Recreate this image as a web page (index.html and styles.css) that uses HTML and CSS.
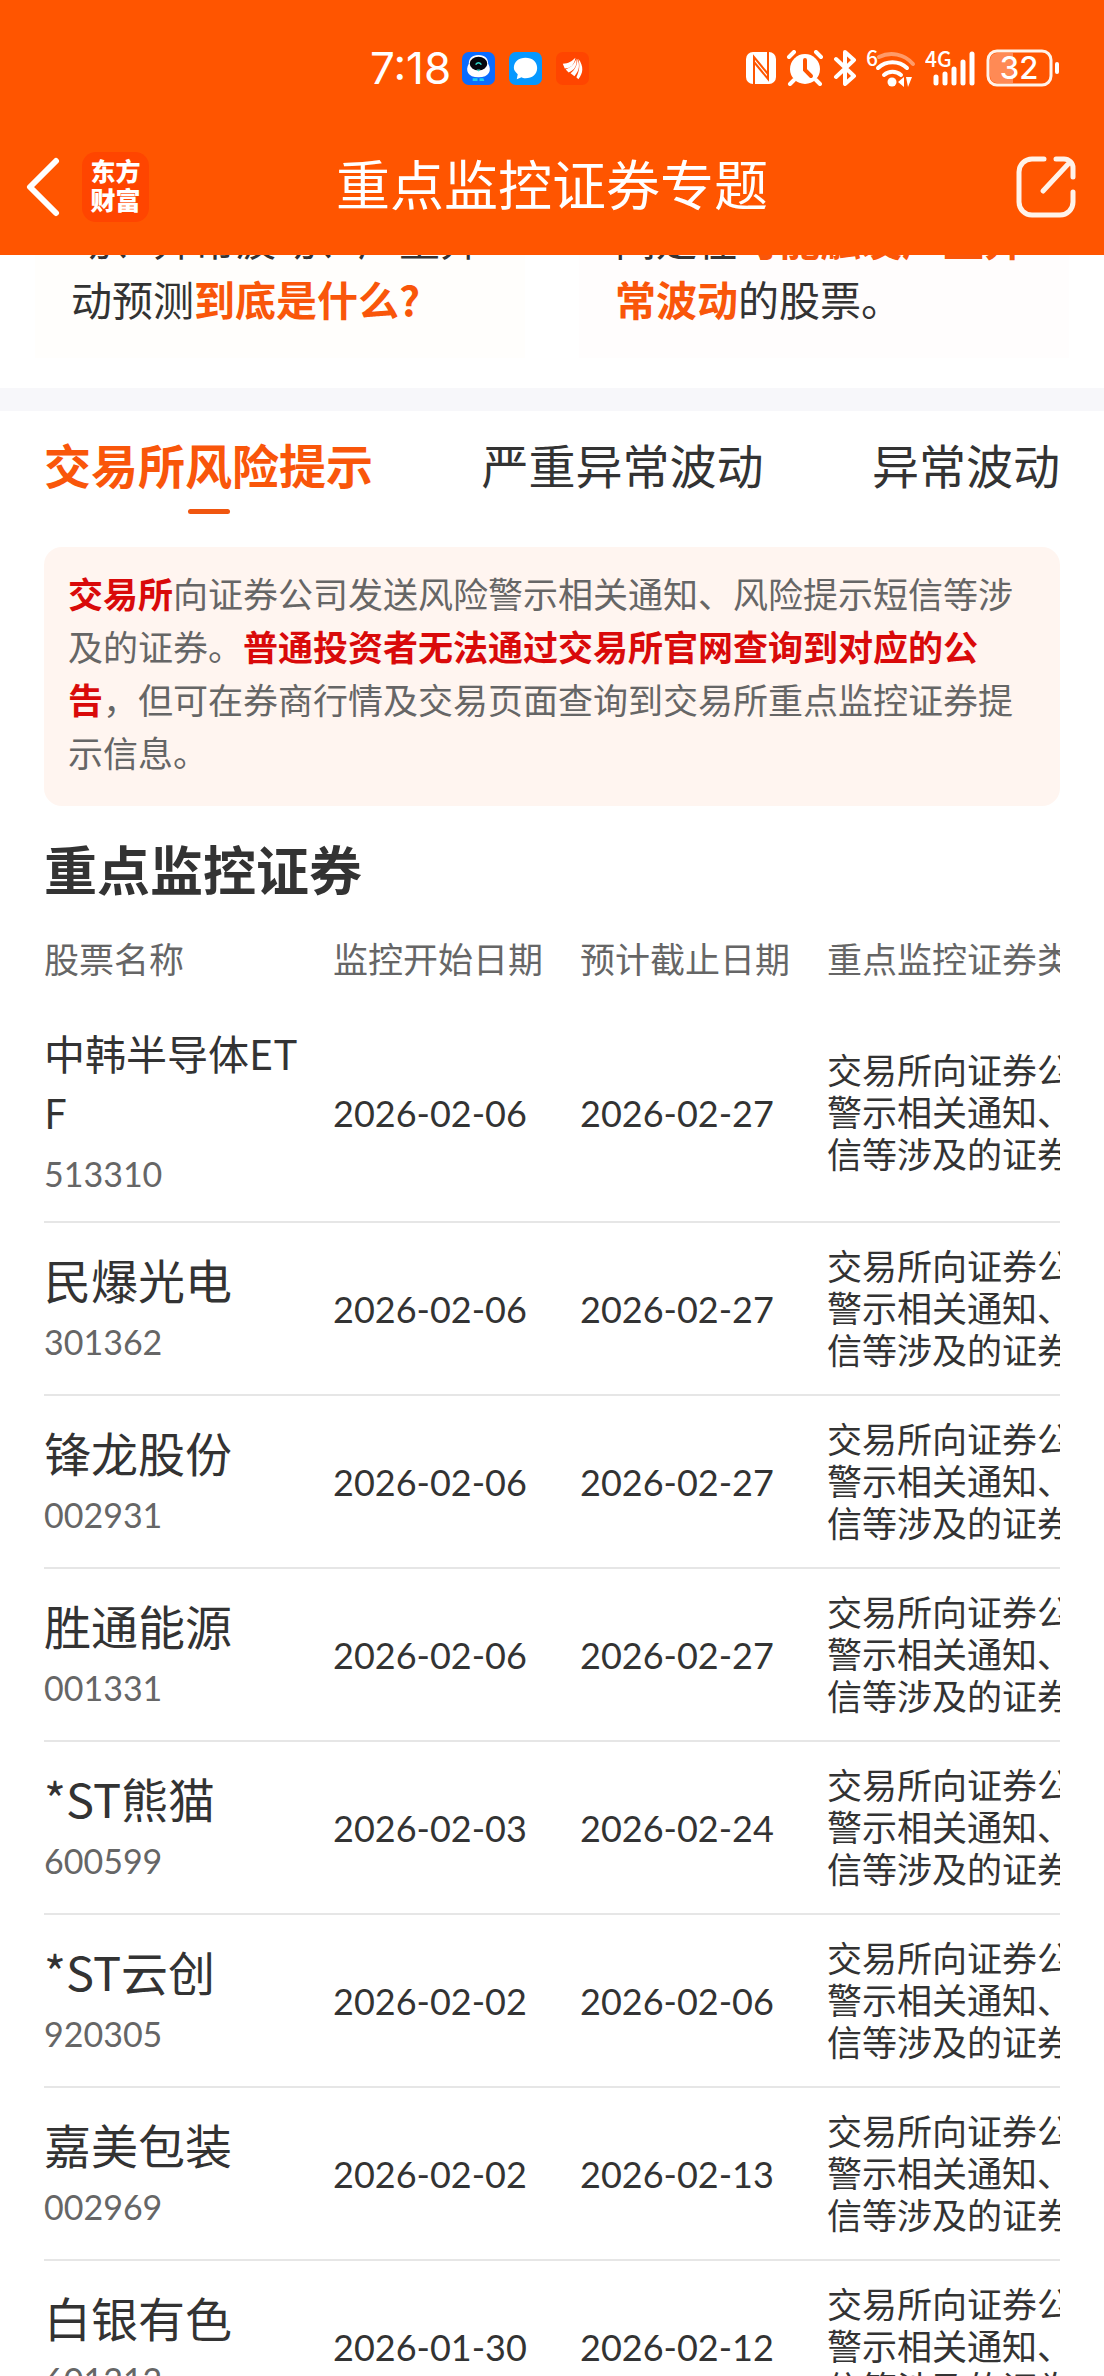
FILE: index.html
```html
<!doctype html>
<html lang="zh-CN">
  <head>
    <meta charset="UTF-8" />
    <meta name="viewport" content="width=device-width, initial-scale=1.0" />
    <title>重点监控证券专题</title>
    <link rel="stylesheet" href="styles.css">
  </head>
  <body>
    <header class="top">
      <div class="status-bar">
        <div class="status-left">
          <span class="time">7:18</span>
          <svg class="app-icon" viewBox="0 0 34 34">
            <rect width="34" height="34" rx="7" fill="#0a6cff" />
            <path d="M11 27h5v3h-5zM18 27h4l1 3h-5z" fill="#1fd0ee" />
            <path d="M17 3c7 0 10 4 10 9 4 7 1 14-10 14S3 19 7 12c0-5 3-9 10-9z" fill="#fff" />
            <ellipse cx="17" cy="12" rx="9" ry="7" fill="#05070d" />
            <path d="M14 13q3-4 6 0" fill="none" stroke="#2fd6c8" stroke-width="1.5" />
            <path d="M15 18h4l-2 2z" fill="#2fd6c8" />
          </svg>
          <svg class="app-icon" viewBox="0 0 34 34">
            <rect width="34" height="34" rx="7" fill="#0698ff" />
            <path d="M17 6c7 0 12 4 12 10.5S24 27 17 27c-2 0-3 0-4-1l-5 2 1-5c-2-2-4-4-4-6.500C5 10 10 6 17 6z" fill="#fff" />
          </svg>
          <svg class="app-icon" viewBox="0 0 34 34">
            <rect width="34" height="34" rx="7" fill="#ff4500" />
            <path d="M7 12c6 0 9-2 13-6-1 7-5 11-11 11zM10 18c6-2 9-6 11-11 1 7-2 12-8 14zM15 22c5-4 7-9 7-15 3 7 2 12-3 18zM21 26c3-6 4-12 2-19 6 8 5 15 0 21z" fill="#fff" />
          </svg>
        </div>
        <div class="status-right">
          <svg width="32" height="34" viewBox="0 0 32 34">
            <rect x="1" y="1" width="30" height="32" rx="7" fill="#fff" />
            <path d="M9 33V6l14 17M23 1v27L9 11" fill="none" stroke="#ff5500" stroke-width="2" />
          </svg>
          <svg width="38" height="36" viewBox="0 0 38 36">
            <circle cx="19" cy="19" r="15" fill="#fff" />
            <path d="M3 7l5-5M35 7l-5-5M8 30l-4 4M30 30l4 4" stroke="#fff" stroke-width="4" stroke-linecap="round" />
            <path d="M19 10v10l6 6" fill="none" stroke="#ff5500" stroke-width="4" stroke-linecap="round" />
          </svg>
          <svg width="24" height="36" viewBox="0 0 24 36">
            <path d="M3 9l18 17-9 8V2l9 8L3 27" fill="none" stroke="#fff" stroke-width="4" stroke-linecap="round" stroke-linejoin="round" />
          </svg>
          <svg width="50" height="38" viewBox="0 0 50 38">
            <text class="tiny" x="0" y="17">6</text>
            <path d="M13 8a28 28 0 0 1 34 7" fill="none" stroke="#ff9b69" stroke-width="4" stroke-linecap="round" />
            <path d="M12 19a21 21 0 0 1 29 0M18 26a13 13 0 0 1 17 0" fill="none" stroke="#fff" stroke-width="4" stroke-linecap="round" />
            <circle cx="26" cy="33" r="4.5" fill="#fff" />
            <path d="M38 28v10l-6-5zM40 28h6l-4 10z" fill="#fff" />
          </svg>
          <svg width="52" height="38" viewBox="0 0 52 38">
            <text class="tiny" x="0" y="18">4G</text>
            <path d="M11 28v6M20 25v9M29 20v14M38 13v21M47 5v29" stroke="#fff" stroke-width="5" stroke-linecap="round" />
          </svg>
          <svg width="74" height="38" viewBox="0 0 74 38">
            <rect x="2" y="2" width="63" height="34" rx="9" fill="none" stroke="#fff3ea" stroke-width="3" />
            <path d="M27 4H11a7 7 0 0 0-7 7v16a7 7 0 0 0 7 7h16z" fill="#ff8a55" />
            <rect x="69" y="13" width="4" height="12" rx="2" fill="#fff" />
            <text class="charge" x="33" y="30" text-anchor="middle">32</text>
          </svg>
        </div>
      </div>
      <nav class="nav-bar">
        <button class="icon-btn" type="button" aria-label="返回">
          <svg width="36" height="60" viewBox="0 0 36 60">
            <path d="M30 4L4 30l26 26" fill="none" stroke="#fff" stroke-width="6" stroke-linecap="round" stroke-linejoin="round" />
          </svg>
        </button>
        <a class="brand" href="#">东方<br />财富</a>
        <h1>重点监控证券专题</h1>
        <button class="icon-btn share" type="button" aria-label="分享">
          <svg width="60" height="62" viewBox="0 0 60 62">
            <path d="M28 3H16A13 13 0 0 0 3 16v30a13 13 0 0 0 13 13h28a13 13 0 0 0 13-13V36M40 3h8a9 9 0 0 1 9 9v9M54 6L27 35" fill="none" stroke="#fff3ea" stroke-width="5" stroke-linecap="round" stroke-linejoin="round" />
          </svg>
        </button>
      </nav>
    </header>

    <main>
      <section class="intro">
        <p>动、异常波动、严重异<br />动预测<b>到底是什么?</b></p>
        <p>间是在<b>可能触发严重异<br />常波动</b>的股票。</p>
      </section>

      <section class="content">
        <div class="tabs" role="tablist">
          <button class="tab active" type="button" role="tab" aria-selected="true">交易所风险提示</button>
          <button class="tab" type="button" role="tab" aria-selected="false">严重异常波动</button>
          <button class="tab" type="button" role="tab" aria-selected="false">异常波动</button>
        </div>

        <p class="notice"><b>交易所</b>向证券公司发送风险警示相关通知、风险提示短信等涉及的证券。<b>普通投资者无法通过交易所官网查询到对应的公告</b>，但可在券商行情及交易页面查询到交易所重点监控证券提示信息。</p>

        <h2>重点监控证券</h2>
        <div class="table-wrap">
          <table>
            <colgroup>
              <col class="col-name" />
              <col class="col-date" />
              <col class="col-date" />
              <col class="col-type" />
            </colgroup>
            <thead>
              <tr>
                <th>股票名称</th>
                <th>监控开始日期</th>
                <th>预计截止日期</th>
                <th>重点监控证券类型</th>
              </tr>
            </thead>
            <tbody>
              <tr>
                <td><div class="name long">中韩半导体ETF</div><div class="code">513310</div></td>
                <td class="date">2026-02-06</td>
                <td class="date">2026-02-27</td>
                <td class="type">交易所向证券公司发送风险警示相关通知、风险提示短信等涉及的证券</td>
              </tr>
              <tr>
                <td><div class="name">民爆光电</div><div class="code">301362</div></td>
                <td class="date">2026-02-06</td>
                <td class="date">2026-02-27</td>
                <td class="type">交易所向证券公司发送风险警示相关通知、风险提示短信等涉及的证券</td>
              </tr>
              <tr>
                <td><div class="name">锋龙股份</div><div class="code">002931</div></td>
                <td class="date">2026-02-06</td>
                <td class="date">2026-02-27</td>
                <td class="type">交易所向证券公司发送风险警示相关通知、风险提示短信等涉及的证券</td>
              </tr>
              <tr>
                <td><div class="name">胜通能源</div><div class="code">001331</div></td>
                <td class="date">2026-02-06</td>
                <td class="date">2026-02-27</td>
                <td class="type">交易所向证券公司发送风险警示相关通知、风险提示短信等涉及的证券</td>
              </tr>
              <tr>
                <td><div class="name">*ST熊猫</div><div class="code">600599</div></td>
                <td class="date">2026-02-03</td>
                <td class="date">2026-02-24</td>
                <td class="type">交易所向证券公司发送风险警示相关通知、风险提示短信等涉及的证券</td>
              </tr>
              <tr>
                <td><div class="name">*ST云创</div><div class="code">920305</div></td>
                <td class="date">2026-02-02</td>
                <td class="date">2026-02-06</td>
                <td class="type">交易所向证券公司发送风险警示相关通知、风险提示短信等涉及的证券</td>
              </tr>
              <tr>
                <td><div class="name">嘉美包装</div><div class="code">002969</div></td>
                <td class="date">2026-02-02</td>
                <td class="date">2026-02-13</td>
                <td class="type">交易所向证券公司发送风险警示相关通知、风险提示短信等涉及的证券</td>
              </tr>
              <tr>
                <td><div class="name">白银有色</div><div class="code">601212</div></td>
                <td class="date">2026-01-30</td>
                <td class="date">2026-02-12</td>
                <td class="type">交易所向证券公司发送风险警示相关通知、风险提示短信等涉及的证券</td>
              </tr>
            </tbody>
          </table>
        </div>
      </section>
    </main>
  </body>
</html>
```
FILE: styles.css
```css
* {
  box-sizing: border-box;
}

body {
  margin: 0;
  height: 100vh;
  display: flex;
  flex-direction: column;
  overflow: hidden;
  font-family: "Noto Sans CJK SC", sans-serif;
  font-size: 35px;
  color: #333;
  background: #fff;
}

h1,
h2,
p {
  margin: 0;
}

button {
  padding: 0;
  border: none;
  background: none;
  font: inherit;
  color: inherit;
}

svg {
  display: block;
}

/* header */
.top {
  flex: none;
  background: #ff5500;
  color: #fff;
}

.status-bar {
  display: flex;
  justify-content: space-between;
  align-items: center;
  height: 118px;
  padding: 18px 44px 0 370px;
}

.status-left,
.status-right {
  display: flex;
  align-items: center;
}

.status-left {
  gap: 14px;
}

.status-right {
  gap: 9px;
}

.time {
  margin-right: -3px;
  font-family: Inter, sans-serif;
  font-size: 44px;
  line-height: 50px;
}

.app-icon {
  width: 33px;
  height: 33px;
}

.tiny {
  font-family: "Noto Sans CJK SC", sans-serif;
  font-size: 21px;
  font-weight: 500;
  fill: #fff;
}

.charge {
  font-family: Inter, sans-serif;
  font-size: 31px;
  font-weight: 500;
  fill: #fff;
}

.nav-bar {
  position: relative;
  display: flex;
  align-items: center;
  height: 137px;
  padding: 0 28px 0 26px;
}

.brand {
  display: grid;
  place-items: center;
  width: 67px;
  height: 70px;
  margin-left: 20px;
  padding-bottom: 3px;
  border-radius: 14px;
  background: #ff4500;
  color: #fff;
  font-size: 25px;
  font-weight: 900;
  line-height: 29px;
  text-decoration: none;
}

h1 {
  position: absolute;
  inset: 0;
  pointer-events: none;
  font-size: 54px;
  font-weight: 400;
  line-height: 130px;
  text-align: center;
}

.share {
  margin-left: auto;
}

/* scrolled content under the header */
main {
  flex: 1;
  min-height: 0;
  overflow: hidden;
}

.intro {
  display: grid;
  grid-template-columns: 1fr 1fr;
  gap: 54px;
  align-content: end;
  height: 133px;
  padding: 0 35px 30px;
  overflow: hidden;
  font-size: 41px;
  line-height: 60px;
  white-space: nowrap;
}

.intro p {
  padding: 0 35px 30px 36px;
  background: #fffefc;
}

.intro p + p {
  background: #fffdfd;
}

.intro b {
  color: #f9560a;
}

.content {
  padding: 0 44px;
  border-top: 23px solid #f7f7fa;
}

.tabs {
  display: flex;
  justify-content: space-between;
  height: 136px;
  padding-top: 18px;
}

.tab {
  position: relative;
  height: 70px;
  font-size: 47px;
  line-height: 70px;
  white-space: nowrap;
}

.tab.active {
  color: #f9560a;
  font-weight: 700;
}

.tab.active::after {
  content: "";
  position: absolute;
  left: 50%;
  bottom: -15px;
  width: 42px;
  height: 5px;
  margin-left: -21px;
  border-radius: 3px;
  background: #f0560f;
}

.notice {
  padding: 19px 24px 28px;
  border-radius: 18px;
  background: #fff5f0;
  color: #666;
  line-height: 53px;
}

.notice b {
  color: #d90a0a;
}

h2 {
  margin-top: 23px;
  font-size: 53px;
  line-height: 78px;
}

.table-wrap {
  overflow: hidden;
}

table {
  width: 1228px;
  table-layout: fixed;
  border-collapse: collapse;
}

.col-name {
  width: 289px;
}

.col-date {
  width: 247px;
}

th {
  height: 98px;
  padding: 6px 0 0;
  vertical-align: top;
  color: #666;
  font-weight: 400;
  line-height: 90px;
  text-align: left;
  white-space: nowrap;
}

td {
  height: 173px;
  padding: 18px 24px 18px 0;
  border-bottom: 2px solid #e6e6e6;
  line-height: 42px;
}

.name {
  font-size: 47px;
  line-height: 66px;
  word-break: break-all;
}

.name.long {
  margin-bottom: 3px;
  font-size: 41px;
  line-height: 59px;
}

.code,
.date {
  font-family: Lato, "Noto Sans CJK SC", sans-serif;
  white-space: nowrap;
}

.code {
  font-size: 34px;
  color: #666;
  line-height: 59px;
}

.date {
  padding-right: 0;
  font-size: 36px;
}

.type {
  padding: 16px 0 20px;
}
```
